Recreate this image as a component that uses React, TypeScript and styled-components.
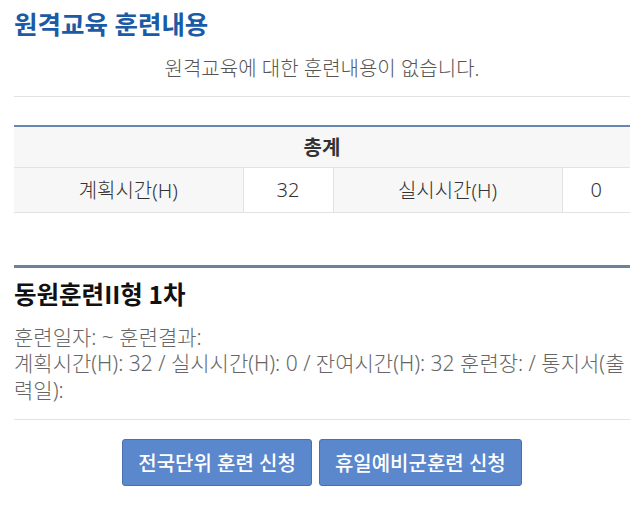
import React from "react";
import styled, { createGlobalStyle } from "styled-components";

const FONT = `"Noto Sans", "Noto Sans CJK KR", sans-serif`;

const Global = createGlobalStyle`
  html, body { margin: 0; padding: 0; background: #fff; }
  body { font-family: ${FONT}; color: #333; }
  * { box-sizing: border-box; }
`;

const Page = styled.div`
  padding: 0 14px;
`;

const Title = styled.h2`
  margin: 4px 0 0;
  font-size: 25.5px;
  line-height: 40px;
  font-weight: 700;
  color: #1b5aa6;
`;

const Empty = styled.p`
  margin: 10px 0 0;
  text-align: center;
  font-size: 20px;
  line-height: 30px;
  font-weight: 300;
  color: #555;
  padding-bottom: 12px;
  border-bottom: 1px solid #e2e2e2;
`;

const Table = styled.table`
  width: 100%;
  margin-top: 28px;
  border-collapse: collapse;
  border-top: 2px solid #6786b2;
  table-layout: fixed;
`;

const Cell = styled.td<{ $shade?: boolean; $bold?: boolean; $tall?: boolean }>`
  border: 1px solid #e2e2e2;
  border-left: none;
  border-top: none;
  text-align: center;
  font-size: 20px;
  color: #333;
  height: ${(p) => (p.$tall ? 45 : 41)}px;
  padding: 0;
  background: ${(p) => (p.$shade ? "#f7f7f7" : "#fff")};
  font-weight: ${(p) => (p.$bold ? 700 : 300)};
  &:last-child { border-right: none; }
`;

const Section = styled.section`
  margin-top: 52px;
  border-top: 3px solid #6b8299;
`;

const SubTitle = styled.h3`
  margin: 8px 0 0;
  font-family: "Noto Sans CJK KR", "Noto Sans", sans-serif;
  font-size: 24.5px;
  line-height: 36px;
  font-weight: 700;
  color: #111;
`;

const Info = styled.p`
  margin: 12px 0 0;
  font-size: 21px;
  line-height: 26.5px;
  font-weight: 300;
  color: #666;
  padding-bottom: 16px;
  border-bottom: 1px solid #e2e2e2;
`;

const Buttons = styled.div`
  display: flex;
  justify-content: center;
  gap: 7px;
  margin-top: 19px;
`;

const Button = styled.button`
  height: 47px;
  padding: 0 15px;
  border: 1px solid #4a70b0;
  border-radius: 3px;
  background: #5b87cd;
  color: #fff;
  font-family: ${FONT};
  font-size: 20px;
  font-weight: 500;
`;

export default function App() {
  return (
    <Page>
      <Global />
      <Title>원격교육 훈련내용</Title>
      <Empty>원격교육에 대한 훈련내용이 없습니다.</Empty>
      <Table>
        <colgroup>
          <col style={{ width: "229px" }} />
          <col style={{ width: "90px" }} />
          <col style={{ width: "229px" }} />
          <col />
        </colgroup>
        <tbody>
          <tr>
            <Cell $shade $bold colSpan={4}>총계</Cell>
          </tr>
          <tr>
            <Cell $shade $tall>계획시간(H)</Cell>
            <Cell $tall>32</Cell>
            <Cell $shade $tall>실시시간(H)</Cell>
            <Cell $tall>0</Cell>
          </tr>
        </tbody>
      </Table>
      <Section>
        <SubTitle>동원훈련II형 1차</SubTitle>
        <Info>
          훈련일자: ~ 훈련결과:
          <br />
          계획시간(H): 32 / 실시시간(H): 0 / 잔여시간(H): 32 훈련장: / 통지서(출력일):
        </Info>
        <Buttons>
          <Button>전국단위 훈련 신청</Button>
          <Button>휴일예비군훈련 신청</Button>
        </Buttons>
      </Section>
    </Page>
  );
}
